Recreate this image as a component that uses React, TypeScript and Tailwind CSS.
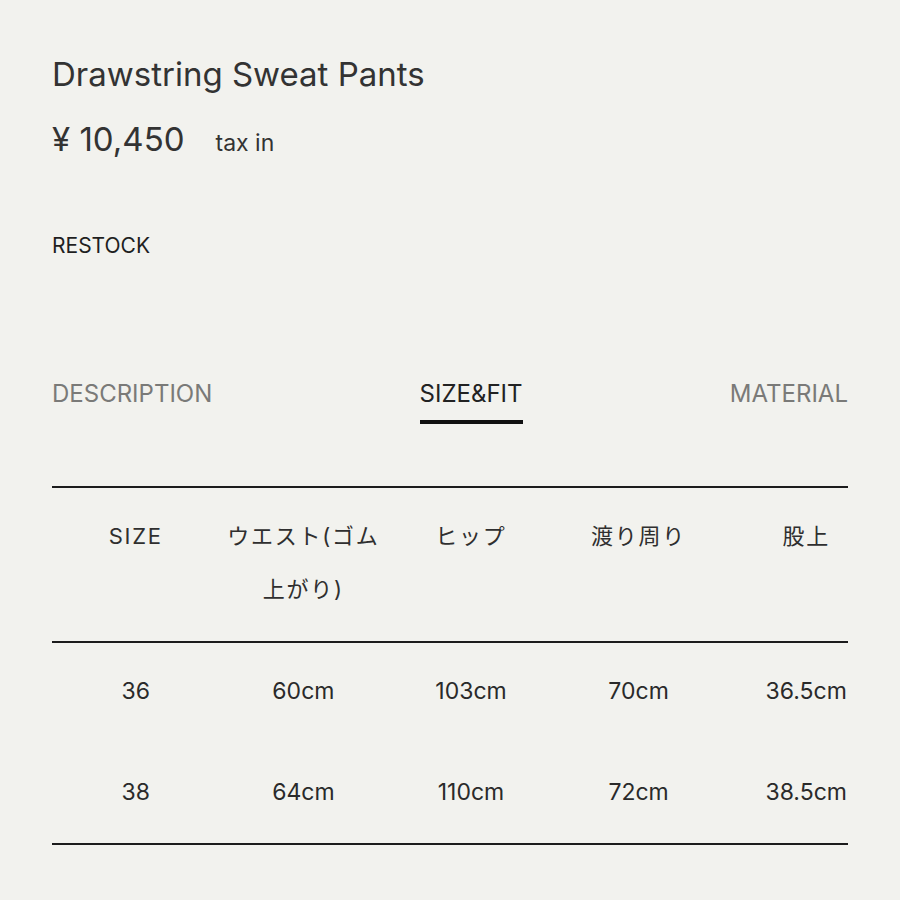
import React from "react";

const headers = ["SIZE", "ウエスト(ゴム\n上がり)", "ヒップ", "渡り周り", "股上"];

const rows = [
  ["36", "60cm", "103cm", "70cm", "36.5cm"],
  ["38", "64cm", "110cm", "72cm", "38.5cm"],
];

export default function App() {
  return (
    <div
      className="min-h-screen bg-[#f2f2ee] px-[52px] pt-[54px] text-[#2f2f2f]"
      style={{ fontFamily: "Inter, 'Noto Sans CJK JP', sans-serif" }}
    >
      <h1 className="text-[33px] leading-[40px] text-[#333]">Drawstring Sweat Pants</h1>

      <div className="mt-[25px] flex items-baseline">
        <span className="text-[33px] leading-[40px] text-[#333]">¥ 10,450</span>
        <span className="ml-[31px] text-[23px] text-[#333]">tax in</span>
      </div>

      <p className="mt-[71px] text-[21px] leading-[28px] text-[#1f1f1f]">RESTOCK</p>

      <div className="mt-[119px] flex w-[796px] justify-between text-[24px] leading-[30px]">
        <span className="text-[#7a7a78]">DESCRIPTION</span>
        <span className="relative text-[#222]">
          SIZE&amp;FIT
          <span className="absolute left-0 right-0 top-[41px] h-[4px] bg-[#111]" />
        </span>
        <span className="text-[#7a7a78]">MATERIAL</span>
      </div>

      <div className="mt-[77px] w-[796px] border-t-2 border-[#1c1c1c]">
        <div className="grid w-[838px] grid-cols-5 pt-[22px] pb-[25px] text-[22px] leading-[53px] tracking-[0.08em]">
          {headers.map((h) => (
            <div key={h} className="whitespace-pre-line text-center">
              {h}
            </div>
          ))}
        </div>
        <div className="border-t-2 border-[#1c1c1c]">
          {rows.map((r, i) => (
            <div
              key={i}
              className="grid h-[101px] w-[838px] grid-cols-5 items-center pb-[3px] text-[23px] text-[#2a2a2a]"
            >
              {r.map((c, j) => (
                <div key={j} className="text-center">
                  {c}
                </div>
              ))}
            </div>
          ))}
        </div>
        <div className="-mt-[2px] border-t-2 border-[#1c1c1c]" />
      </div>
    </div>
  );
}
